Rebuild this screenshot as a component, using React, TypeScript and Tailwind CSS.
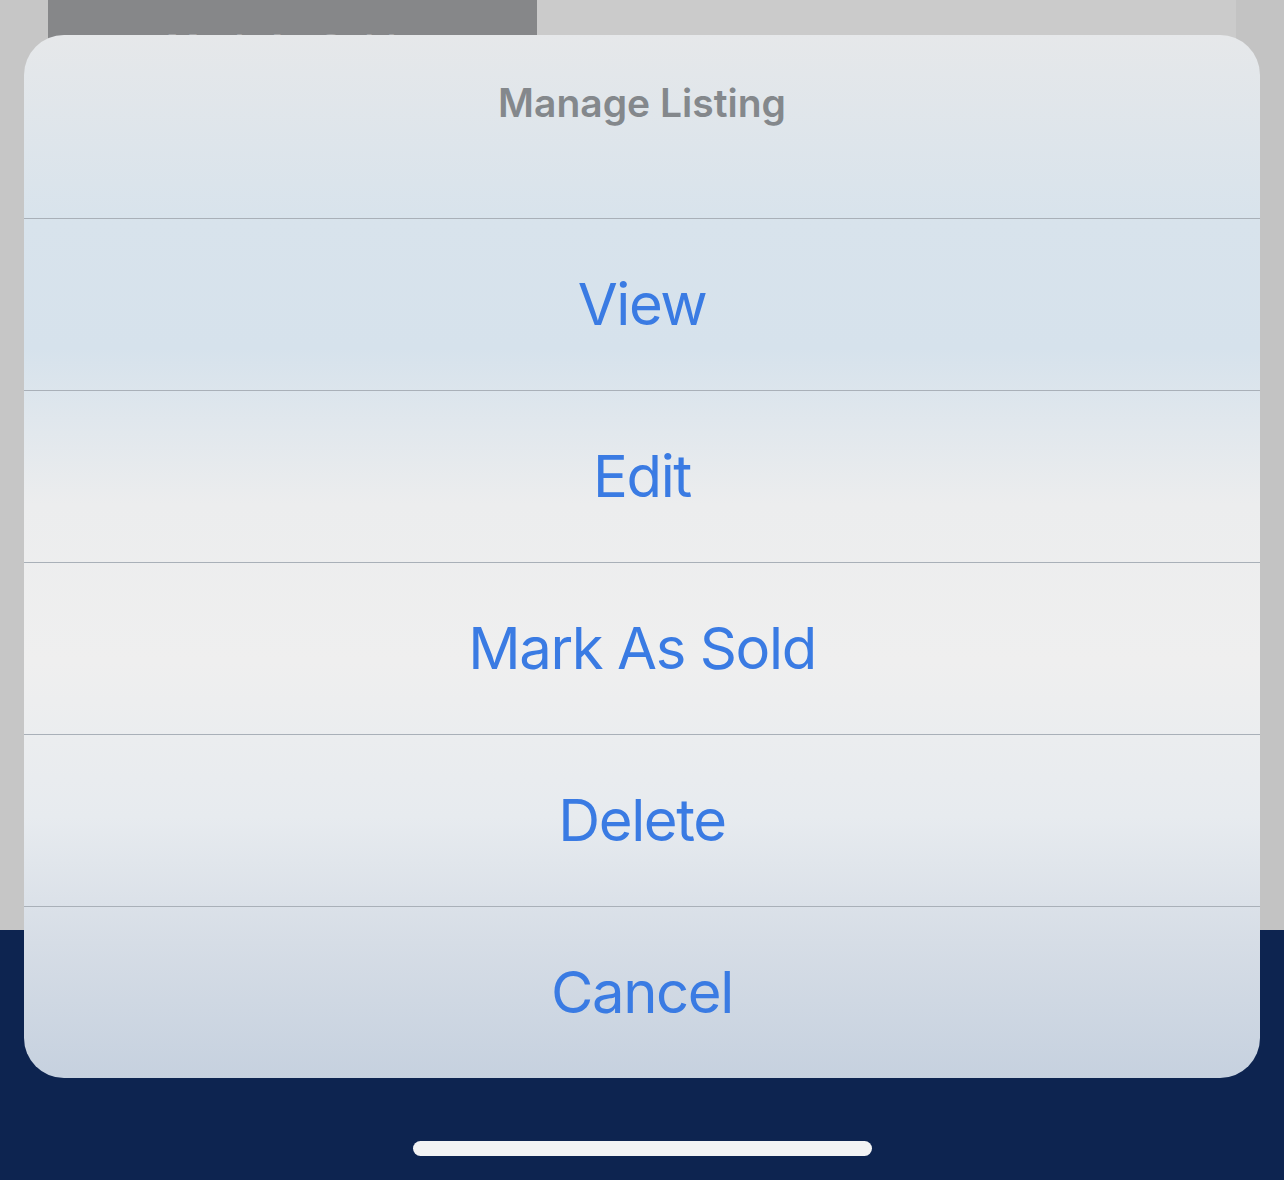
import React from 'react';

const actions = ['View', 'Edit', 'Mark As Sold', 'Delete', 'Cancel'];

export default function App() {
  return (
    <div className="relative w-[1284px] h-[1180px] overflow-hidden bg-[#0d2450] font-['Inter',sans-serif]">
      {/* dimmed page behind the sheet */}
      <div className="flex h-[930px]">
        <div className="w-[48px] bg-[#c6c6c6]" />
        <div className="flex-1 bg-[#cbcbcb]">
          <div className="w-[489px] h-[60px] bg-[#868789] pl-[118px] pt-[29px] text-[36px] font-semibold leading-none text-[#a6a7a9]">
            Mark As Sold
          </div>
        </div>
        <div className="w-[48px] bg-[#c3c3c3]" />
      </div>

      {/* action sheet */}
      <div className="absolute left-[24px] top-[35px] w-[1236px] rounded-[40px] overflow-hidden bg-[linear-gradient(180deg,#e6e8ea_0%,#d8e3ec_18%,#d6e2ec_30%,#ecedee_45%,#efefef_60%,#e7ebef_75%,#d6dde6_87%,#c6d1df_100%)]">
        <div className="h-[183px] pt-[46px] text-center text-[39px] leading-[44px] font-semibold text-[#84888c]">
          Manage Listing
        </div>
        {actions.map((a) => (
          <div
            key={a}
            className="h-[172px] border-t border-[#a9b0b8] flex items-center justify-center text-[58px] text-[#3a7be3] tracking-[-1.4px]"
          >
            {a}
          </div>
        ))}
      </div>

      {/* home indicator */}
      <div className="absolute left-[413px] top-[1141px] w-[459px] h-[15px] rounded-full bg-[#f2f3f4]" />
    </div>
  );
}
